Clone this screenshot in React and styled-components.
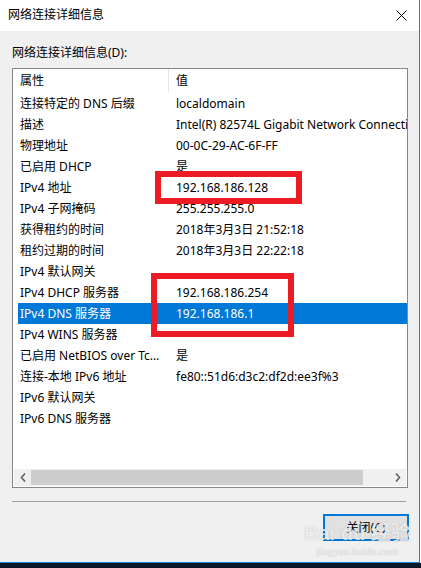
import React from 'react';
import styled, { createGlobalStyle } from 'styled-components';

const GlobalStyle = createGlobalStyle`
  body {
    margin: 0;
    background: #ffffff;
    font-family: "Noto Sans", "Noto Sans CJK SC", sans-serif;
    font-size: 12px;
    color: #000;
  }
`;

const Screen = styled.div`
  width: 421px;
  height: 568px;
  display: flex;
  flex-direction: column;
  overflow: hidden;
`;

const Window = styled.div`
  position: relative;
  width: 419px;
  border-right: 1px solid #1883d7;
  border-bottom: 1px solid #1883d7;
  display: flex;
  flex-direction: column;
`;

const TitleBar = styled.div`
  height: 31px;
  background: #ffffff;
  display: flex;
  align-items: center;
  justify-content: space-between;
  padding-left: 8px;
`;

const Title = styled.span`
  font-size: 12px;
  line-height: 16px;
  margin-top: -1px;
`;

const CloseBox = styled.div`
  width: 46px;
  height: 31px;
  display: flex;
  align-items: center;
  justify-content: center;
  margin-right: -5px;
`;

const Content = styled.div`
  height: 531px;
  box-sizing: border-box;
  background: #f0f0f0;
  padding-top: 14px;
  display: flex;
  flex-direction: column;
`;

const GroupLabel = styled.div`
  margin-left: 12px;
  line-height: 16px;
  margin-bottom: 7px;
`;

const ListBox = styled.div`
  margin-left: 12px;
  width: 396px;
  height: 420px;
  box-sizing: border-box;
  border: 1px solid #828790;
  background: #ffffff;
  display: flex;
  flex-direction: column;
`;

const Header = styled.div`
  height: 24px;
  display: grid;
  grid-template-columns: 156px 1fr;
  align-items: stretch;
`;

const HeaderCell = styled.div`
  display: flex;
  align-items: center;
  padding-left: ${p => p.$pad}px;
  border-right: ${p => (p.$divider ? '1px solid #e5e5e5' : 'none')};
  margin: ${p => (p.$divider ? '0 0 1px 0' : '0')};
  line-height: 16px;
`;

const Body = styled.div`
  height: 376px;
  padding-left: 5px;
  overflow: hidden;
`;

const Row = styled.div`
  height: 21px;
  display: grid;
  grid-template-columns: 151px 1fr;
  align-items: center;
  background: ${p => (p.$selected ? '#0078d7' : 'transparent')};
  color: ${p => (p.$selected ? '#ffffff' : '#000000')};
`;

const Cell = styled.div`
  padding-left: ${p => p.$pad}px;
  padding-right: ${p => p.$padRight || 0}px;
  white-space: nowrap;
  overflow: hidden;
  text-overflow: ${p => (p.$ellipsis ? 'ellipsis' : 'clip')};
  line-height: 16px;
`;

const HScroll = styled.div`
  height: 17px;
  margin: 0 1px;
  background: #f0f0f0;
  display: flex;
  align-items: center;
`;

const ArrowButton = styled.div`
  width: 17px;
  height: 17px;
  display: flex;
  align-items: center;
  justify-content: center;
`;

const Track = styled.div`
  flex: 1;
  height: 15px;
  display: flex;
  align-items: center;
`;

const Thumb = styled.div`
  height: 15px;
  width: 332px;
  background: #cdcdcd;
`;

const Separator = styled.div`
  margin: 13px 0 0 12px;
  width: 394px;
  height: 1px;
  background: #a0a0a0;
`;

const ButtonRow = styled.div`
  margin-top: 12px;
  display: flex;
  justify-content: flex-end;
  padding-right: 10px;
`;

const DialogButton = styled.button`
  width: 86px;
  height: 27px;
  box-sizing: border-box;
  border: 2px solid #0078d7;
  background: #e1e1e1;
  font-family: inherit;
  font-size: 12px;
  line-height: 16px;
  color: #000;
  padding: 0;
`;

const RedBox = styled.div`
  position: absolute;
  box-sizing: border-box;
  border: 6px solid #ed1c24;
  pointer-events: none;
`;

const Watermark = styled.div`
  position: absolute;
  left: 304px;
  top: 521px;
  display: flex;
  flex-direction: column;
  align-items: center;
  color: rgba(255, 255, 255, 0.75);
  text-shadow: 0 0 1px rgba(90, 90, 90, 0.45);
  pointer-events: none;
`;

const WatermarkLogo = styled.div`
  font-family: "Liberation Sans", "Noto Sans CJK SC", sans-serif;
  font-weight: bold;
  font-size: 20px;
  line-height: 24px;
`;

const WatermarkUrl = styled.div`
  font-family: "Liberation Serif", serif;
  font-size: 11px;
  line-height: 12px;
`;

const Taskbar = styled.div`
  flex: 1;
  background: #0b1726;
`;

const rows = [
  ['连接特定的 DNS 后缀', 'localdomain'],
  ['描述', 'Intel(R) 82574L Gigabit Network Connection'],
  ['物理地址', '00-0C-29-AC-6F-FF'],
  ['已启用 DHCP', '是'],
  ['IPv4 地址', '192.168.186.128'],
  ['IPv4 子网掩码', '255.255.255.0'],
  ['获得租约的时间', '2018年3月3日 21:52:18'],
  ['租约过期的时间', '2018年3月3日 22:22:18'],
  ['IPv4 默认网关', ''],
  ['IPv4 DHCP 服务器', '192.168.186.254'],
  ['IPv4 DNS 服务器', '192.168.186.1'],
  ['IPv4 WINS 服务器', ''],
  ['已启用 NetBIOS over Tcpip', '是'],
  ['连接-本地 IPv6 地址', 'fe80::51d6:d3c2:df2d:ee3f%3'],
  ['IPv6 默认网关', ''],
  ['IPv6 DNS 服务器', ''],
];

const Chevron = ({ dir }) => (
  <svg width="6" height="9" viewBox="0 0 6 9">
    <polyline
      points={dir === 'left' ? '5,0.5 1.5,4.5 5,8.5' : '1,0.5 4.5,4.5 1,8.5'}
      fill="none"
      stroke="#606060"
      strokeWidth="1.6"
    />
  </svg>
);

const App = () => (
  <Screen>
    <GlobalStyle />
    <Window>
      <TitleBar>
        <Title>网络连接详细信息</Title>
        <CloseBox>
          <svg width="11" height="11" viewBox="0 0 11 11">
            <path d="M0.5 0.5 L10.5 10.5 M10.5 0.5 L0.5 10.5" stroke="#000" strokeWidth="1" />
          </svg>
        </CloseBox>
      </TitleBar>
      <Content>
        <GroupLabel>网络连接详细信息(D):</GroupLabel>
        <ListBox>
          <Header>
            <HeaderCell $pad={7} $divider>属性</HeaderCell>
            <HeaderCell $pad={7}>值</HeaderCell>
          </Header>
          <Body>
            {rows.map(([name, value], i) => (
              <Row key={name} $selected={i === 10}>
                <Cell $pad={2} $padRight={4} $ellipsis>{name}</Cell>
                <Cell $pad={7}>{value}</Cell>
              </Row>
            ))}
          </Body>
          <HScroll>
            <ArrowButton><Chevron dir="left" /></ArrowButton>
            <Track><Thumb /></Track>
            <ArrowButton><Chevron dir="right" /></ArrowButton>
          </HScroll>
        </ListBox>
        <Separator />
        <ButtonRow>
          <DialogButton>关闭(C)</DialogButton>
        </ButtonRow>
      </Content>
      <RedBox style={{ left: 155, top: 171, width: 147, height: 33 }} />
      <RedBox style={{ left: 151, top: 273, width: 143, height: 64 }} />
      <Watermark>
        <WatermarkLogo>Bai du 经验</WatermarkLogo>
        <WatermarkUrl>jingyan.baidu.com</WatermarkUrl>
      </Watermark>
    </Window>
    <Taskbar />
  </Screen>
);

export default App;
